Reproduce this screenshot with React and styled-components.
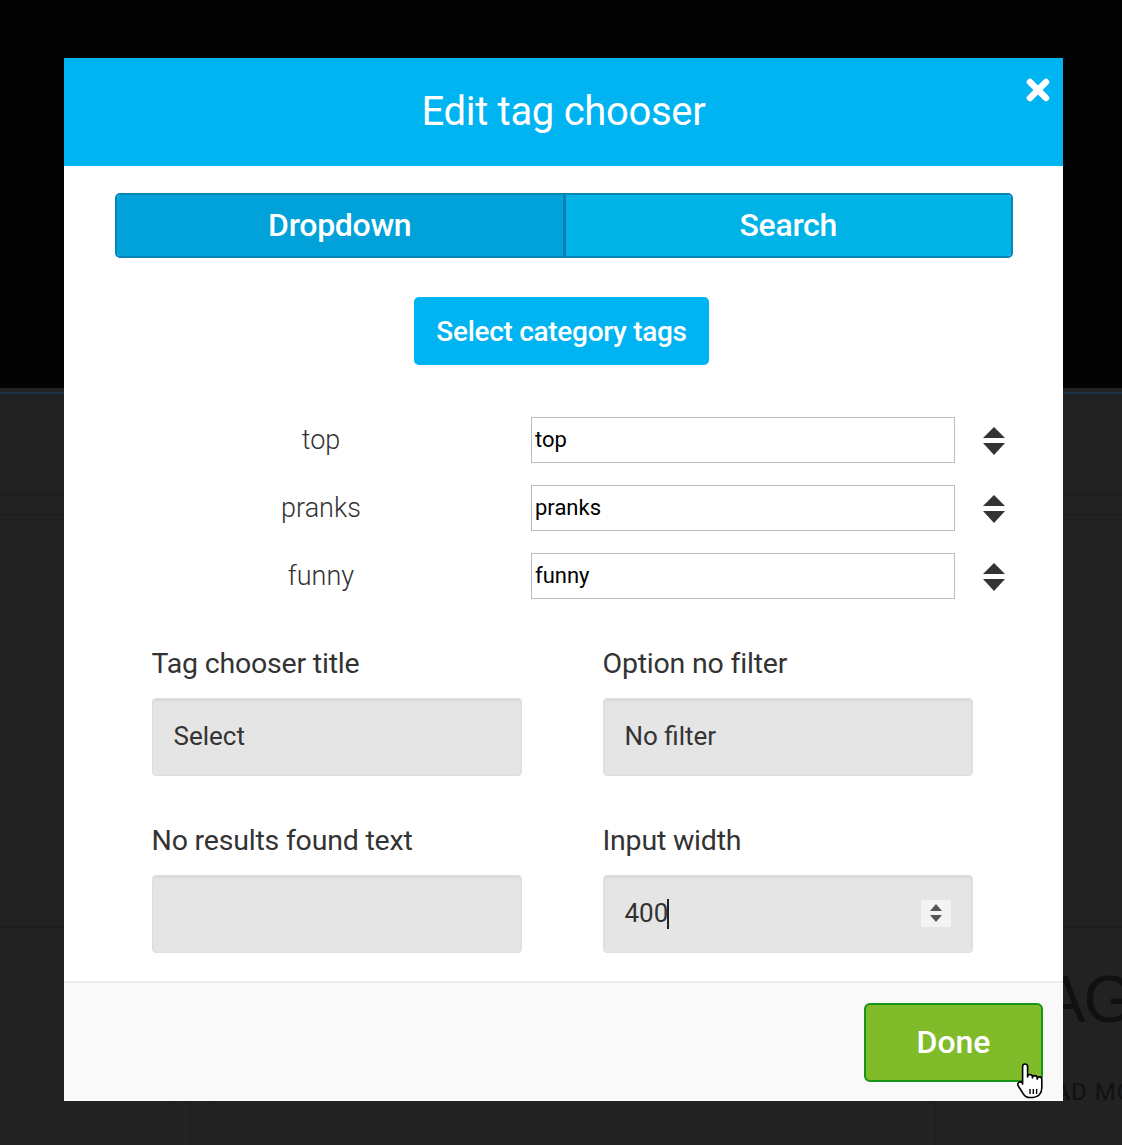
import React from "react";
import styled, { createGlobalStyle } from "styled-components";

const GlobalStyle = createGlobalStyle`
  html, body {
    margin: 0;
    padding: 0;
    background: #222;
  }
  body {
    font-family: Roboto, "Liberation Sans", Arial, sans-serif;
    width: 1122px;
    height: 1145px;
    overflow: hidden;
    position: relative;
  }
  * { box-sizing: border-box; }
`;

//---------------------------//
//---Page behind the modal---//
//---------------------------//
const Page = () => (
  <PageWrap>
    <Hero />
    <Band />
    <ThinBand />
    <Content />
    <Cards>
      <Gutter />
      <CardCol />
      <CardCol />
      <CardCol $wide />
      <RightCard>
        <CardTitle>TAGS</CardTitle>
        <CardLink>READ MORE</CardLink>
      </RightCard>
    </Cards>
  </PageWrap>
);

const PageWrap = styled.div`
  width: 1122px;
  height: 1145px;
  background: #222;
  display: flex;
  flex-direction: column;
`;

const Hero = styled.div`
  height: 388px;
  background: #030303;
`;

const Band = styled.div`
  height: 103px;
  border-top: 2px solid #1a3444;
  border-bottom: 1px solid #1a1d20;
  margin-top: 4px;
`;

const ThinBand = styled.div`
  height: 20px;
  border-bottom: 1px solid #1a1d20;
`;

const Content = styled.div`
  height: 413px;
  border-bottom: 2px solid #1b1e21;
`;

const Cards = styled.div`
  flex: 1;
  display: flex;
`;

const Gutter = styled.div`
  width: 170px;
`;

const CardCol = styled.div`
  width: ${(p) => (p.$wide ? "725px" : "20px")};
  border-left: 1px solid #1a1d22;
`;

const RightCard = styled.div`
  flex: 1;
  border-left: 1px solid #1a1d22;
  padding: 36px 0 0 72px;
  white-space: nowrap;
  overflow: hidden;
`;

const CardTitle = styled.div`
  font-family: "Liberation Sans", Arial, sans-serif;
  font-size: 66px;
  letter-spacing: -2px;
  color: #111;
  line-height: 70px;
`;

const CardLink = styled.div`
  font-size: 24px;
  color: #111;
  margin-top: 44px;
  padding-left: 16px;
  letter-spacing: 1px;
`;

//-----------------------//
//---Modal and content---//
//-----------------------//
const tags = ["top", "pranks", "funny"];

const SortIcon = ({ size = 22, color = "#333" }) => (
  <svg width={size} height={29} viewBox="0 0 22 29">
    <path d="M11 0 L22 11 H0 Z" fill={color} />
    <path d="M0 16 H22 L11 28 Z" fill={color} />
  </svg>
);

const CloseIcon = () => (
  <svg width="26" height="26" viewBox="0 0 26 26">
    <path
      d="M5 5 L21 21 M21 5 L5 21"
      stroke="#fff"
      strokeWidth="6.5"
      strokeLinecap="round"
    />
  </svg>
);

const HandCursor = () => (
  <svg width="30" height="38" viewBox="0 0 30 38">
    <path
      d="M9 2 c1.6 0 2.6 1.1 2.6 2.7 V15 c0-1.5 1-2.5 2.4-2.5 s2.4 1 2.4 2.5 v1 c0-1.5 1-2.4 2.4-2.4 s2.4 1 2.4 2.4 v1.2 c0-1.4 1-2.3 2.3-2.3 s2.3 1 2.3 2.4 V26 c0 5.5-3.6 9.5-8.8 9.5 h-3.2 c-3 0-4.8-1.3-6.5-3.6 L2.3 24 c-.9-1.3-.6-2.8.6-3.6 s2.6-.4 3.5.7 L6.6 22 V4.7 C6.6 3.1 7.5 2 9 2 Z"
      fill="#fff"
      stroke="#000"
      strokeWidth="1.6"
      strokeLinejoin="round"
    />
    <path d="M14 27 v5 M17.3 27 v5 M20.6 27 v5" stroke="#000" strokeWidth="1.4" />
  </svg>
);

export default function App() {
  return (
    <>
      <GlobalStyle />
      <Page />
      <Modal>
        <Header>
          <Title>Edit tag chooser</Title>
          <CloseButton>
            <CloseIcon />
          </CloseButton>
        </Header>

        <Body>
          <Tabs>
            <Tab $active>Dropdown</Tab>
            <Tab>Search</Tab>
          </Tabs>

          <CategoryButton>Select category tags</CategoryButton>

          <TagList>
            {tags.map((tag) => (
              <TagRow key={tag}>
                <TagLabel>{tag}</TagLabel>
                <TagInput>{tag}</TagInput>
                <SortHandle>
                  <SortIcon />
                </SortHandle>
              </TagRow>
            ))}
          </TagList>

          <FieldGrid>
            <Field>
              <FieldLabel>Tag chooser title</FieldLabel>
              <FieldInput>Select</FieldInput>
            </Field>
            <Field>
              <FieldLabel>Option no filter</FieldLabel>
              <FieldInput>No filter</FieldInput>
            </Field>
            <Field>
              <FieldLabel>No results found text</FieldLabel>
              <FieldInput />
            </Field>
            <Field>
              <FieldLabel>Input width</FieldLabel>
              <FieldInput>
                <span>400</span>
                <Caret />
                <Spinner>
                  <svg width="14" height="20" viewBox="0 0 14 20">
                    <path d="M7 1 L13 8 H1 Z" fill="#555" />
                    <path d="M1 12 H13 L7 19 Z" fill="#555" />
                  </svg>
                </Spinner>
              </FieldInput>
            </Field>
          </FieldGrid>
        </Body>

        <Footer>
          <DoneButton>
            Done
            <CursorSpot>
              <HandCursor />
            </CursorSpot>
          </DoneButton>
        </Footer>
      </Modal>
    </>
  );
}

const Modal = styled.div`
  position: absolute;
  left: 64px;
  top: 58px;
  width: 999px;
  height: 1043px;
  background: #fff;
  display: flex;
  flex-direction: column;
`;

const Header = styled.div`
  position: relative;
  height: 108px;
  background: #00b4f1;
  display: flex;
  align-items: center;
  justify-content: center;
`;

const Title = styled.h1`
  margin: 0 0 2px;
  font-size: 40px;
  font-weight: 400;
  color: #fff;
  letter-spacing: -0.3px;
`;

const CloseButton = styled.div`
  position: absolute;
  right: 12px;
  top: 19px;
  cursor: pointer;
  display: flex;
`;

const Body = styled.div`
  flex: 1;
  padding: 27px 50px 0 51px;
  display: flex;
  flex-direction: column;
  align-items: center;
`;

const Tabs = styled.div`
  width: 898px;
  height: 65px;
  display: flex;
  border: 2px solid #0a86b6;
  border-radius: 5px;
  overflow: hidden;
`;

const Tab = styled.div`
  flex: 1;
  display: flex;
  align-items: center;
  justify-content: center;
  padding-bottom: 2px;
  font-size: 32px;
  font-weight: 500;
  color: #fff;
  background: ${(p) => (p.$active ? "#00a2d9" : "#00b3e6")};
  border-right: ${(p) => (p.$active ? "3px solid #0a7fb0" : "none")};
  letter-spacing: -0.3px;
`;

const CategoryButton = styled.button`
  margin-top: 39px;
  margin-right: 5px;
  height: 68px;
  width: 295px;
  border: none;
  border-radius: 5px;
  background: #00b4f1;
  color: #fff;
  font-family: inherit;
  font-size: 28px;
  font-weight: 500;
  letter-spacing: -0.3px;
  cursor: pointer;
`;

const TagList = styled.div`
  margin-top: 52px;
  width: 898px;
  display: flex;
  flex-direction: column;
  gap: 22px;
`;

const TagRow = styled.div`
  display: grid;
  grid-template-columns: 416px 424px 1fr;
  align-items: center;
`;

const TagLabel = styled.div`
  text-align: center;
  font-size: 27px;
  font-weight: 300;
  color: #333;
  padding-right: 4px;
`;

const TagInput = styled.div`
  height: 46px;
  border: 1px solid #bcbcbc;
  display: flex;
  align-items: center;
  padding: 0 3px 2px;
  font-size: 22px;
  color: #000;
`;

const SortHandle = styled.div`
  display: flex;
  padding-left: 28px;
  padding-top: 2px;
`;

const FieldGrid = styled.div`
  margin-top: 48px;
  width: 821px;
  align-self: center;
  display: grid;
  grid-template-columns: 370px 370px;
  column-gap: 81px;
  row-gap: 48px;
  margin-left: -4px;
`;

const Field = styled.div`
  display: flex;
  flex-direction: column;
`;

const FieldLabel = styled.label`
  font-size: 28.5px;
  color: #333;
  line-height: 34px;
  margin-bottom: 17px;
  letter-spacing: -0.2px;
`;

const FieldInput = styled.div`
  position: relative;
  height: 78px;
  background: #e5e5e5;
  border: 1px solid #dedede;
  border-radius: 4px;
  box-shadow: inset 0 2px 2px rgba(0, 0, 0, 0.05);
  display: flex;
  align-items: center;
  padding: 0 21px 2px;
  font-size: 26px;
  color: #333;
`;

const Caret = styled.span`
  display: inline-block;
  width: 2px;
  height: 30px;
  background: #222;
  margin-left: -1px;
  margin-top: 2px;
`;

const Spinner = styled.div`
  margin-left: auto;
  margin-right: 0;
  width: 30px;
  height: 27px;
  background: #f3f3f3;
  display: flex;
  align-items: center;
  justify-content: center;
`;

const Footer = styled.div`
  height: 120px;
  background: #f9f9f9;
  border-top: 2px solid #ececec;
  display: flex;
  justify-content: flex-end;
  padding: 20px 20px 0 0;
`;

const DoneButton = styled.button`
  position: relative;
  width: 179px;
  height: 79px;
  background: #80bb2a;
  border: 2px solid #169516;
  border-radius: 6px;
  color: #fff;
  font-family: inherit;
  font-size: 32px;
  font-weight: 500;
  cursor: pointer;
  padding: 0 0 2px;
`;

const CursorSpot = styled.span`
  position: absolute;
  right: -5px;
  bottom: -20px;
  display: flex;
`;
